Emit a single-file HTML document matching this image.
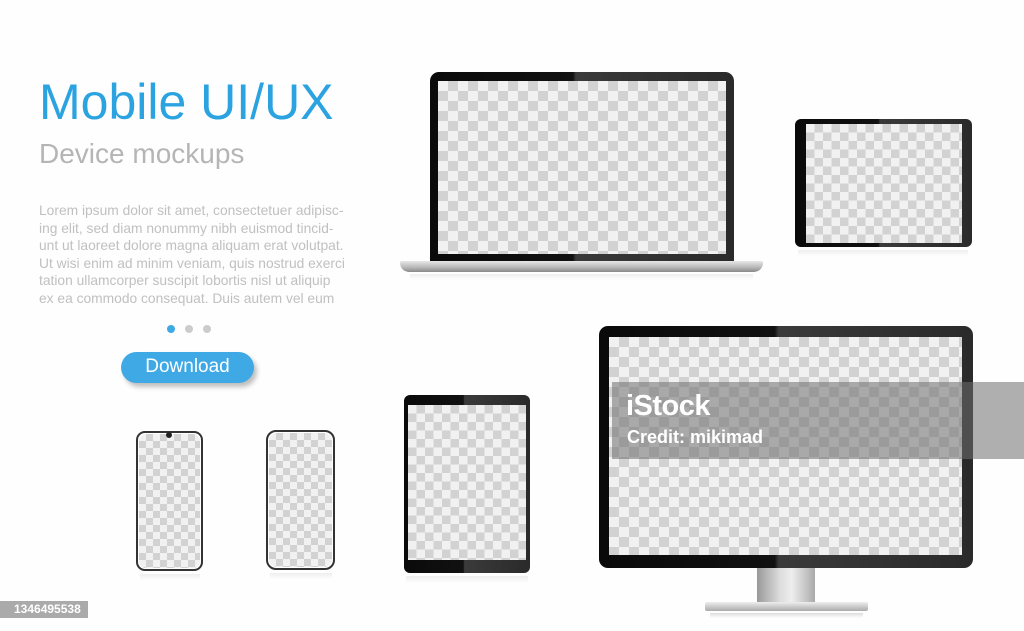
<!DOCTYPE html>
<html><head><meta charset="utf-8"><style>
*{margin:0;padding:0;box-sizing:border-box}
body{width:1024px;height:631px;background:#fefefe;position:relative;overflow:hidden;font-family:"Liberation Sans",sans-serif}
.a{position:absolute}
.ck{position:absolute;background-color:#f1f1f1;background-image:linear-gradient(45deg,#d2d2d2 25%,transparent 25%,transparent 75%,#d2d2d2 75%),linear-gradient(45deg,#d2d2d2 25%,transparent 25%,transparent 75%,#d2d2d2 75%);}
.c10{background-size:20px 20px;background-position:0 0,10px 10px}
.c8{background-size:17px 17px;background-position:0 0,8.5px 8.5px}
.c7{background-size:14px 14px;background-position:0 0,7px 7px}
.bez{background:linear-gradient(90deg,#0a0a0a 0%,#111 47%,#3a3a3a 48%,#2a2a2a 100%)}
</style></head><body>
<div class="a" style="left:39px;top:73px;font-size:50px;color:#2ba3e0">Mobile UI/UX</div>
<div class="a" style="left:39px;top:138px;font-size:28px;color:#b5b5b5">Device mockups</div>
<div class="a" style="left:39px;top:202px;width:330px;font-size:13.8px;line-height:17.5px;color:#c0c0c0">Lorem ipsum dolor sit amet, consectetuer adipisc-<br>ing elit, sed diam nonummy nibh euismod tincid-<br>unt ut laoreet dolore magna aliquam erat volutpat.<br>Ut wisi enim ad minim veniam, quis nostrud exerci<br>tation ullamcorper suscipit lobortis nisl ut aliquip<br>ex ea commodo consequat. Duis autem vel eum</div>
<div class="a" style="left:167px;top:325px;width:8px;height:8px;border-radius:50%;background:#3fa9e6"></div>
<div class="a" style="left:185px;top:325px;width:8px;height:8px;border-radius:50%;background:#ccc"></div>
<div class="a" style="left:203px;top:325px;width:8px;height:8px;border-radius:50%;background:#ccc"></div>
<div class="a" style="left:121px;top:352px;width:133px;height:31px;border-radius:16px;background:#3fa9e6;box-shadow:3px 4px 5px rgba(0,0,0,.25);color:#fff;font-size:19px;text-align:center;line-height:30px">Download</div>

<div class="a bez" style="left:430px;top:72px;width:304px;height:190px;border-radius:9px 9px 0 0"></div>
<div class="ck c10" style="left:438px;top:81px;width:288px;height:173px"></div>
<div class="a" style="left:400px;top:261px;width:363px;height:11px;border-radius:2px 2px 10px 10px;background:linear-gradient(#e8e8e8,#b5b5b5 60%,#888)"></div>
<div class="a" style="left:410px;top:274px;width:343px;height:6px;background:linear-gradient(#eee,#fefefe)"></div>

<div class="a bez" style="left:795px;top:119px;width:177px;height:128px;border-radius:6px"></div>
<div class="ck c8" style="left:806px;top:124px;width:156px;height:119px"></div>
<div class="a" style="left:798px;top:250px;width:170px;height:6px;background:linear-gradient(#eee,#fefefe)"></div>

<div class="a" style="left:136px;top:431px;width:67px;height:140px;border-radius:9px;border:2px solid #333;background:#fff"></div>
<div class="ck c7" style="left:139px;top:434px;width:61px;height:134px;border-radius:7px"></div>
<div class="a" style="left:166px;top:432px;width:6px;height:6px;border-radius:50%;background:#222"></div>
<div class="a" style="left:266px;top:430px;width:69px;height:140px;border-radius:10px;border:2px solid #333;background:#fff"></div>
<div class="ck c7" style="left:269px;top:433px;width:63px;height:134px;border-radius:8px"></div>
<div class="a" style="left:140px;top:574px;width:60px;height:6px;background:linear-gradient(#eee,#fefefe)"></div>
<div class="a" style="left:270px;top:573px;width:62px;height:6px;background:linear-gradient(#eee,#fefefe)"></div>

<div class="a bez" style="left:404px;top:395px;width:126px;height:178px;border-radius:6px"></div>
<div class="ck c8" style="left:408px;top:405px;width:118px;height:155px"></div>
<div class="a" style="left:406px;top:576px;width:122px;height:7px;background:linear-gradient(#eee,#fefefe)"></div>

<div class="a bez" style="left:599px;top:326px;width:374px;height:242px;border-radius:9px"></div>
<div class="ck c10" style="left:609px;top:337px;width:353px;height:218px"></div>
<div class="a" style="left:757px;top:568px;width:58px;height:35px;background:linear-gradient(90deg,#999,#ddd 40%,#eee 60%,#aaa)"></div>
<div class="a" style="left:705px;top:602px;width:163px;height:9px;border-radius:2px;background:linear-gradient(#eee,#aaa)"></div>
<div class="a" style="left:710px;top:613px;width:153px;height:5px;background:linear-gradient(#ddd,#fefefe)"></div>

<div class="a" style="left:612px;top:382px;width:412px;height:77px;background:rgba(110,110,110,.55)"></div>
<div class="a" style="left:626px;top:390px;font-size:29px;font-weight:bold;color:#fff;letter-spacing:-0.5px">iStock</div>
<div class="a" style="left:627px;top:427px;font-size:18px;font-weight:bold;color:#fff">Credit: mikimad</div>
<div class="a" style="left:0;top:601px;width:88px;height:17px;background:#aaa;color:#fff;font-size:12px;font-weight:bold;line-height:17px;padding-left:14px">1346495538</div>
</body></html>
